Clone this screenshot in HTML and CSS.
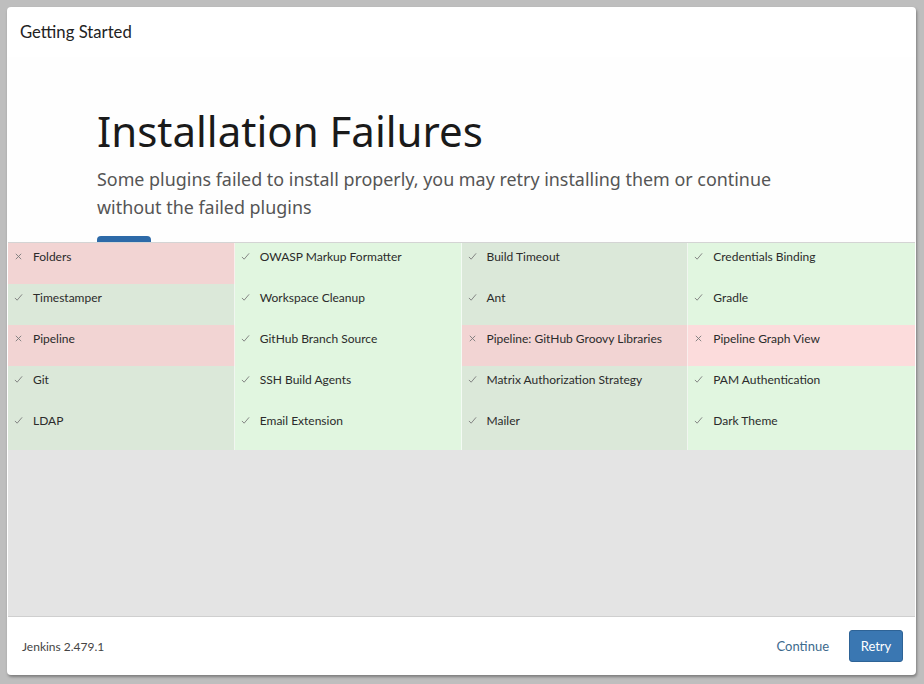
FILE: index.html
```html
<!DOCTYPE html>
<html>
<head>
<meta charset="utf-8">
<link rel="stylesheet" href="styles.css">
</head>
<body>
<div class="modal">
  <div class="modal-header">Getting Started</div>
  <div class="intro">
    <h1 class="title">Installation Failures</h1>
    <p class="lead">Some plugins failed to install properly, you may retry installing them or continue without the failed plugins</p>
    <div class="intro-btn"></div>
  </div>
  <div class="plugins">
    <div class="grid">
      <div class="cell fail"><span class="ic"><svg viewBox="0 0 10 10"><path d="M2 2L8 8M8 2L2 8"/></svg></span>Folders</div>
      <div class="cell ok"><span class="ic"><svg viewBox="0 0 10 10"><path d="M1 5.5L3.5 8L9 1.5"/></svg></span>OWASP Markup Formatter</div>
      <div class="cell ok"><span class="ic"><svg viewBox="0 0 10 10"><path d="M1 5.5L3.5 8L9 1.5"/></svg></span>Build Timeout</div>
      <div class="cell ok"><span class="ic"><svg viewBox="0 0 10 10"><path d="M1 5.5L3.5 8L9 1.5"/></svg></span>Credentials Binding</div>

      <div class="cell ok"><span class="ic"><svg viewBox="0 0 10 10"><path d="M1 5.5L3.5 8L9 1.5"/></svg></span>Timestamper</div>
      <div class="cell ok"><span class="ic"><svg viewBox="0 0 10 10"><path d="M1 5.5L3.5 8L9 1.5"/></svg></span>Workspace Cleanup</div>
      <div class="cell ok"><span class="ic"><svg viewBox="0 0 10 10"><path d="M1 5.5L3.5 8L9 1.5"/></svg></span>Ant</div>
      <div class="cell ok"><span class="ic"><svg viewBox="0 0 10 10"><path d="M1 5.5L3.5 8L9 1.5"/></svg></span>Gradle</div>

      <div class="cell fail"><span class="ic"><svg viewBox="0 0 10 10"><path d="M2 2L8 8M8 2L2 8"/></svg></span>Pipeline</div>
      <div class="cell ok"><span class="ic"><svg viewBox="0 0 10 10"><path d="M1 5.5L3.5 8L9 1.5"/></svg></span>GitHub Branch Source</div>
      <div class="cell fail"><span class="ic"><svg viewBox="0 0 10 10"><path d="M2 2L8 8M8 2L2 8"/></svg></span>Pipeline: GitHub Groovy Libraries</div>
      <div class="cell fail"><span class="ic"><svg viewBox="0 0 10 10"><path d="M2 2L8 8M8 2L2 8"/></svg></span>Pipeline Graph View</div>

      <div class="cell ok"><span class="ic"><svg viewBox="0 0 10 10"><path d="M1 5.5L3.5 8L9 1.5"/></svg></span>Git</div>
      <div class="cell ok"><span class="ic"><svg viewBox="0 0 10 10"><path d="M1 5.5L3.5 8L9 1.5"/></svg></span>SSH Build Agents</div>
      <div class="cell ok"><span class="ic"><svg viewBox="0 0 10 10"><path d="M1 5.5L3.5 8L9 1.5"/></svg></span>Matrix Authorization Strategy</div>
      <div class="cell ok"><span class="ic"><svg viewBox="0 0 10 10"><path d="M1 5.5L3.5 8L9 1.5"/></svg></span>PAM Authentication</div>

      <div class="cell ok"><span class="ic"><svg viewBox="0 0 10 10"><path d="M1 5.5L3.5 8L9 1.5"/></svg></span>LDAP</div>
      <div class="cell ok"><span class="ic"><svg viewBox="0 0 10 10"><path d="M1 5.5L3.5 8L9 1.5"/></svg></span>Email Extension</div>
      <div class="cell ok"><span class="ic"><svg viewBox="0 0 10 10"><path d="M1 5.5L3.5 8L9 1.5"/></svg></span>Mailer</div>
      <div class="cell ok"><span class="ic"><svg viewBox="0 0 10 10"><path d="M1 5.5L3.5 8L9 1.5"/></svg></span>Dark Theme</div>
    </div>
  </div>
  <div class="footer">
    <div class="version">Jenkins 2.479.1</div>
    <div class="actions">
      <a class="link">Continue</a>
      <button class="btn">Retry</button>
    </div>
  </div>
</div>
</body>
</html>
```

FILE: styles.css
```css
html, body {
  margin: 0;
  padding: 0;
}
body {
  background: #bebebe;
  font-family: "Lato", "Noto Sans", sans-serif;
  color: #333;
  width: 924px;
  height: 684px;
  overflow: hidden;
}
.modal {
  margin: 7px 0 0 7px;
  width: 909px;
  height: 668px;
  background: #fff;
  border-radius: 4px;
  box-shadow: 1px 2px 3px rgba(0,0,0,0.35);
  display: flex;
  flex-direction: column;
  overflow: hidden;
}
.modal-header {
  height: 50px;
  padding: 0 0 0 13px;
  font-size: 16.7px;
  line-height: 50px;
  color: #222;
  flex: none;
}
.intro {
  height: 185px;
  padding: 0 0 0 90px;
  overflow: hidden;
  background: #fefefe;
  flex: none;
}
.title {
  margin: 48px 0 0 0;
  font-family: "Noto Sans", "Lato", sans-serif;
  font-size: 42px;
  font-weight: 400;
  line-height: 52px;
  color: #1a1a1a;
}
.lead {
  margin: 8px 0 0 0;
  width: 700px;
  font-family: "Noto Sans", "Lato", sans-serif;
  font-size: 17.9px;
  line-height: 28px;
  color: #555;
}
.intro-btn {
  margin-top: 15px;
  width: 54px;
  height: 30px;
  background: #2d6aa8;
  border-radius: 4px 4px 0 0;
}
.plugins {
  flex: 1;
  background: #e4e4e4;
  border-top: 1px solid #d4d4d4;
  border-bottom: 1px solid #cfcfcf;
  margin: 0 1px;
}
.grid {
  display: grid;
  grid-template-columns: repeat(4, 1fr);
  grid-template-rows: 41px 41px 41px 41px 43px;
}
.cell {
  display: flex;
  align-items: flex-start;
  padding: 7px 0 0 6px;
  font-size: 12px;
  line-height: 14px;
  color: #2b2b2b;
  border-right: 1px solid rgba(255,255,255,0.6);
}
.cell:nth-child(4n) {
  border-right: none;
}
.ic {
  width: 19px;
  flex: none;
  display: flex;
  padding-top: 2px;
}
.ic svg {
  width: 9px;
  height: 9px;
  fill: none;
  stroke: #7a7a7a;
  stroke-width: 1;
}
.ok:nth-child(4n+1), .ok:nth-child(4n+3) {
  background: #dbe8d9;
}
.ok:nth-child(4n+2), .ok:nth-child(4n) {
  background: #e1f6e0;
}
.fail:nth-child(4n+1), .fail:nth-child(4n+3) {
  background: #f2d4d3;
}
.fail:nth-child(4n+2), .fail:nth-child(4n) {
  background: #fcdcdc;
}
.footer {
  height: 58px;
  flex: none;
  display: flex;
  align-items: center;
  justify-content: space-between;
  padding: 0 13px 0 15px;
}
.version {
  font-size: 12px;
  color: #444;
}
.actions {
  display: flex;
  align-items: center;
  gap: 20px;
}
.link {
  font-size: 13px;
  color: #3d6a8d;
}
.btn {
  width: 54px;
  height: 32px;
  border: 1px solid #2e6396;
  border-radius: 3px;
  background: #3a77b2;
  color: #fff;
  font-family: "Lato", "Noto Sans", sans-serif;
  font-size: 13px;
  padding: 0;
}
```
